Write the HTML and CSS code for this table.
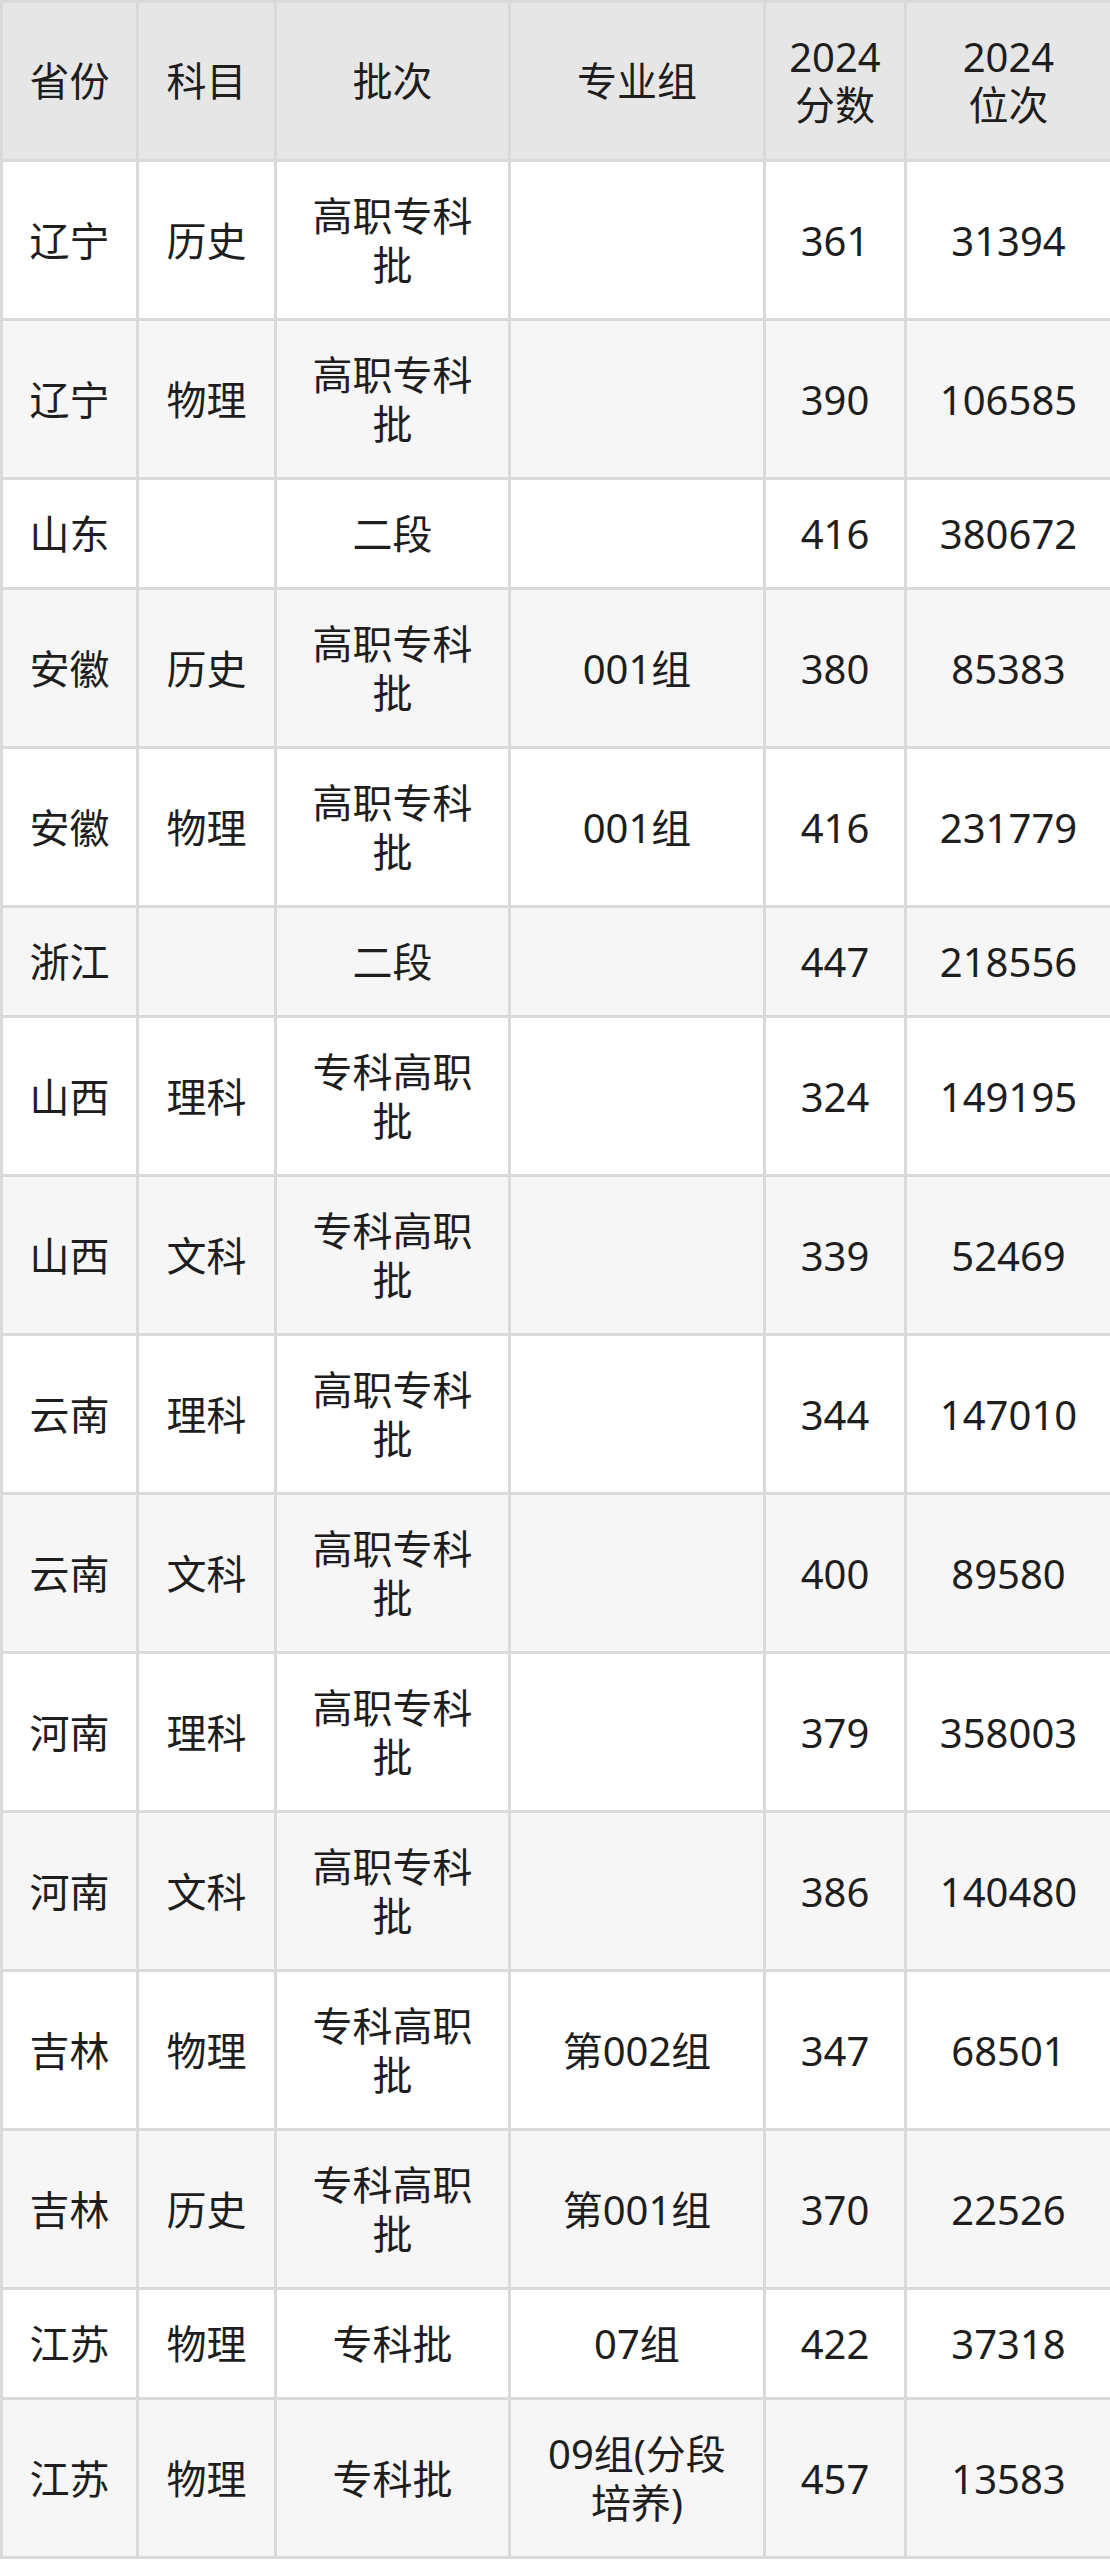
FILE: index.html
```html
<!DOCTYPE html>
<html lang="zh-CN">
<head>
<meta charset="utf-8">
<title>2024 分数位次</title>
<link rel="stylesheet" href="styles.css">
</head>
<body>
<table class="score-table">
  <colgroup>
    <col class="c-prov">
    <col class="c-subj">
    <col class="c-batch">
    <col class="c-group">
    <col class="c-score">
    <col class="c-rank">
  </colgroup>
  <thead>
    <tr>
      <th>省份</th>
      <th>科目</th>
      <th>批次</th>
      <th>专业组</th>
      <th>2024分数</th>
      <th class="th-rank">2024位次</th>
    </tr>
  </thead>
  <tbody>
    <tr><td>辽宁</td><td>历史</td><td>高职专科批</td><td></td><td>361</td><td>31394</td></tr>
    <tr><td>辽宁</td><td>物理</td><td>高职专科批</td><td></td><td>390</td><td>106585</td></tr>
    <tr><td>山东</td><td></td><td>二段</td><td></td><td>416</td><td>380672</td></tr>
    <tr><td>安徽</td><td>历史</td><td>高职专科批</td><td>001组</td><td>380</td><td>85383</td></tr>
    <tr><td>安徽</td><td>物理</td><td>高职专科批</td><td>001组</td><td>416</td><td>231779</td></tr>
    <tr><td>浙江</td><td></td><td>二段</td><td></td><td>447</td><td>218556</td></tr>
    <tr><td>山西</td><td>理科</td><td>专科高职批</td><td></td><td>324</td><td>149195</td></tr>
    <tr><td>山西</td><td>文科</td><td>专科高职批</td><td></td><td>339</td><td>52469</td></tr>
    <tr><td>云南</td><td>理科</td><td>高职专科批</td><td></td><td>344</td><td>147010</td></tr>
    <tr><td>云南</td><td>文科</td><td>高职专科批</td><td></td><td>400</td><td>89580</td></tr>
    <tr><td>河南</td><td>理科</td><td>高职专科批</td><td></td><td>379</td><td>358003</td></tr>
    <tr><td>河南</td><td>文科</td><td>高职专科批</td><td></td><td>386</td><td>140480</td></tr>
    <tr><td>吉林</td><td>物理</td><td>专科高职批</td><td>第002组</td><td>347</td><td>68501</td></tr>
    <tr><td>吉林</td><td>历史</td><td>专科高职批</td><td>第001组</td><td>370</td><td>22526</td></tr>
    <tr><td>江苏</td><td>物理</td><td>专科批</td><td>07组</td><td>422</td><td>37318</td></tr>
    <tr><td>江苏</td><td>物理</td><td>专科批</td><td>09组(分段培养)</td><td>457</td><td>13583</td></tr>
  </tbody>
</table>
</body>
</html>
```

FILE: styles.css
```css
html, body {
  margin: 0;
  padding: 0;
  background: #ffffff;
}

body {
  font-family: "Noto Sans", "Noto Sans CJK SC", sans-serif;
  color: #1e1e1e;
}

.score-table {
  width: 1110px;
  border-collapse: collapse;
  table-layout: fixed;
  font-size: 40px;
}

.c-prov { width: 136px; }
.c-subj { width: 138px; }
.c-batch { width: 234px; }
.c-group { width: 255px; }
.c-score { width: 141px; }
.c-rank { width: 206px; }

.score-table th,
.score-table td {
  border: 3px solid #dadada;
  text-align: center;
  vertical-align: middle;
  font-weight: 400;
  padding: 29px 20px;
  line-height: 49px;
}

.score-table th {
  background: #e6e6e6;
  line-height: 48px;
  padding: 30px 20px;
}

.score-table th.th-rank {
  padding-left: 45px;
  padding-right: 45px;
}

.score-table tbody tr:nth-child(odd) td {
  background: #ffffff;
}

.score-table tbody tr:nth-child(even) td {
  background: #f6f6f6;
}
```
